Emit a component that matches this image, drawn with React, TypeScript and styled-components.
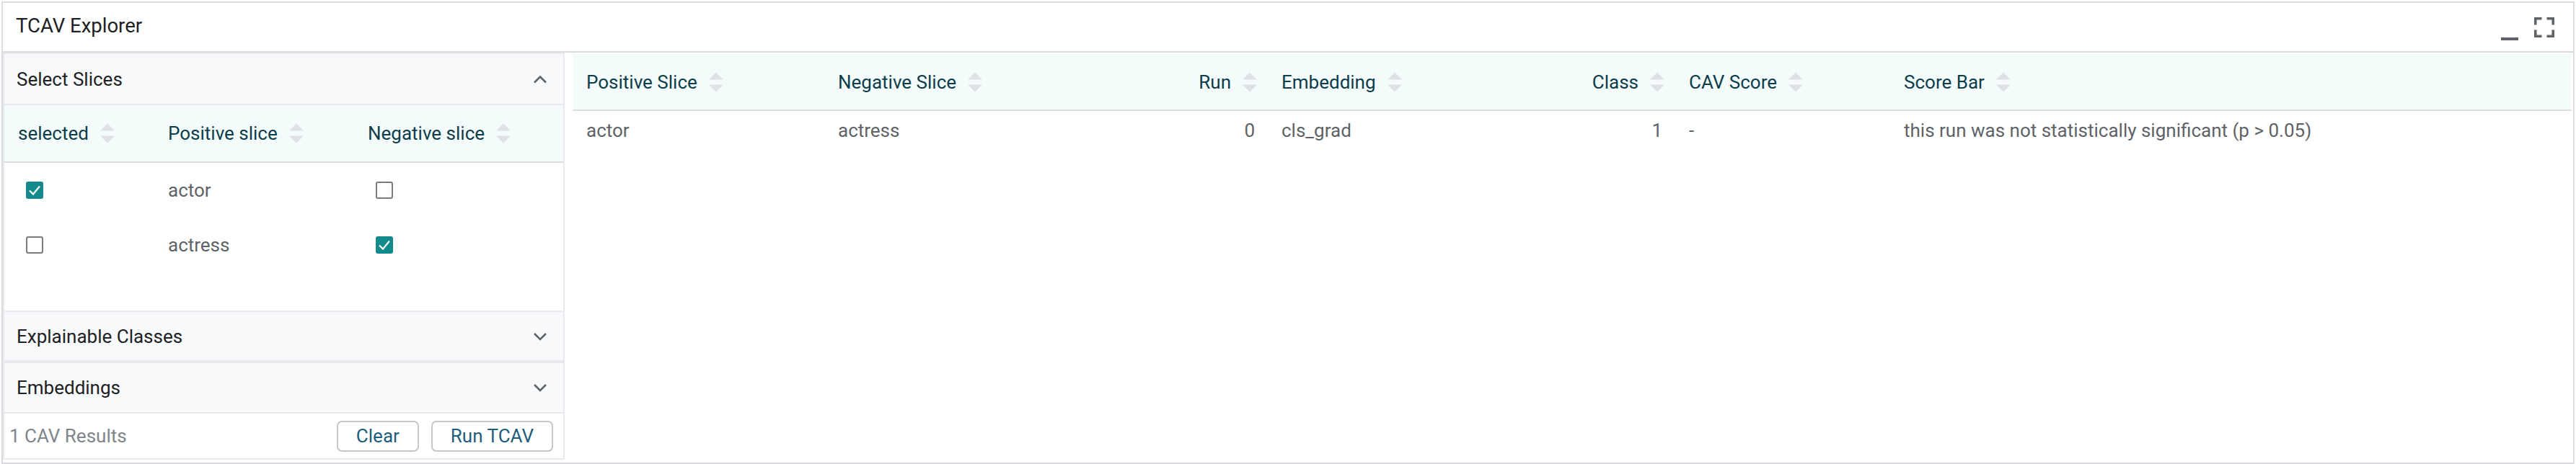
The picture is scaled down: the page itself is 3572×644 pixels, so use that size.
import React from "react";
import styled, { createGlobalStyle } from "styled-components";

const GlobalStyle = createGlobalStyle`
  html, body { margin: 0; padding: 0; background: #ffffff; }
  body { font-family: Roboto, "Noto Sans", "Liberation Sans", sans-serif; }
  * { box-sizing: border-box; }
`;

const Frame = styled.div`
  margin: 2px 2px 0 2px;
  width: 3568px;
  height: 642px;
  border: 2px solid #dadce0;
  overflow: hidden;
  display: flex;
  flex-direction: column;
  background: #fff;
`;

const TitleBar = styled.div`
  height: 69px;
  flex: none;
  border-bottom: 2px solid #dadce0;
  display: flex;
  align-items: center;
  padding: 0 26px 0 18px;
`;

const Title = styled.div`
  flex: 1;
  font-size: 27.5px;
  color: #202124;
  line-height: 1;
  padding-bottom: 3px;
`;

const TitleIcons = styled.div`
  align-self: flex-start;
  margin-top: 20px;
  display: flex;
  align-items: flex-start;
  gap: 22px;
  color: #5f6368;
`;

const Body = styled.div`
  flex: 1;
  display: flex;
  align-items: flex-start;
  gap: 11px;
  padding-right: 2px;
`;

const LeftPanel = styled.div`
  width: 779px;
  flex: none;
  border: 2px solid #e8eaed;
  display: flex;
  flex-direction: column;
`;

const Section = styled.div<{ $first?: boolean }>`
  border-top: ${(p) => (p.$first ? "0" : "2px solid #e8eaed")};
  border-bottom: 2px solid #e8eaed;
`;

const SectionHeader = styled.div<{ $h: number }>`
  height: ${(p) => p.$h}px;
  background: #f8f9fa;
  display: flex;
  align-items: center;
  justify-content: space-between;
  padding: 0 22px 0 17px;
  font-size: 26px;
  color: #202124;
`;

const SliceTable = styled.div`
  display: grid;
  grid-template-columns: 208px 277px 1fr;
  grid-template-rows: 80px 76px 76px;
  height: 285px;
  align-content: start;
`;

const SliceHeadCell = styled.div`
  background: #f3fbfb;
  border-bottom: 2px solid #dadce0;
  display: flex;
  align-items: center;
  gap: 16px;
  padding-left: 19px;
  font-size: 26px;
  color: #0d3d4b;
`;

const SliceCell = styled.div`
  display: flex;
  align-items: center;
  padding-left: 19px;
  font-size: 26px;
  color: #5f6368;
`;

const Box = styled.span<{ $checked: boolean }>`
  width: 24px;
  height: 24px;
  margin-left: 11px;
  border-radius: 3px;
  display: inline-flex;
  align-items: center;
  justify-content: center;
  background: ${(p) => (p.$checked ? "#12898b" : "#fff")};
  border: ${(p) => (p.$checked ? "0" : "2px solid #7a7a7a")};
`;

const Footer = styled.div`
  height: 62px;
  display: flex;
  align-items: center;
  padding: 0 14px 0 7px;
`;

const ResultsLabel = styled.div`
  flex: 1;
  font-size: 26px;
  color: #80868b;
`;

const Buttons = styled.div`
  display: flex;
  gap: 17px;
`;

const Button = styled.button`
  height: 43px;
  padding: 0 25px;
  background: #fff;
  border: 2px solid #c4c7cb;
  border-radius: 7px;
  font-family: Roboto, "Noto Sans", "Liberation Sans", sans-serif;
  font-size: 26px;
  color: #1f5e7b;
  line-height: 1;
  cursor: pointer;
`;

const ResultsTable = styled.div`
  flex: 1;
  margin-top: 2px;
  display: grid;
  grid-template-columns: 349px 457px 158px 322px 243px 298px 1fr;
`;

const HeadCell = styled.div<{ $right?: boolean }>`
  height: 79px;
  background: #f3fbfb;
  border-bottom: 2px solid #dadce0;
  display: flex;
  align-items: center;
  justify-content: ${(p) => (p.$right ? "flex-end" : "flex-start")};
  gap: 16px;
  padding: 0 15px 0 19px;
  font-size: 26px;
  color: #0d3d4b;
`;

const DataCell = styled.div<{ $right?: boolean }>`
  height: 54px;
  display: flex;
  align-items: center;
  justify-content: ${(p) => (p.$right ? "flex-end" : "flex-start")};
  padding: 0 18px 0 19px;
  font-size: 26px;
  color: #5f6368;
  white-space: nowrap;
`;

const SortArrows = () => (
  <svg width="20" height="28" viewBox="0 0 20 28" style={{ flex: "none" }}>
    <polygon points="0,10.5 10,0.5 20,10.5" fill="#dfe1e4" />
    <polygon points="0,17.5 20,17.5 10,27.5" fill="#dfe1e4" />
  </svg>
);

const Chevron = ({ up }: { up?: boolean }) => (
  <svg width="20" height="14" viewBox="0 0 20 14">
    <polyline
      points={up ? "2,11.5 10,3.5 18,11.5" : "2,3 10,11 18,3"}
      fill="none"
      stroke="#5f6368"
      strokeWidth="2.6"
    />
  </svg>
);

const CheckBox = ({ checked }: { checked: boolean }) => (
  <Box $checked={checked}>
    {checked && (
      <svg width="24" height="24" viewBox="0 0 24 24">
        <polyline points="5,12.5 10,17.5 19,6.5" fill="none" stroke="#fff" strokeWidth="2.2" />
      </svg>
    )}
  </Box>
);

const MinimizeIcon = () => (
  <svg width="24" height="32" viewBox="0 0 24 32">
    <rect x="0" y="28" width="24" height="4" fill="currentColor" />
  </svg>
);

const FullscreenIcon = () => (
  <svg width="28" height="28" viewBox="0 0 28 28">
    <path
      d="M1.75 10.5V1.75H10.5M17.5 1.75H26.25V10.5M26.25 17.5V26.25H17.5M10.5 26.25H1.75V17.5"
      fill="none"
      stroke="currentColor"
      strokeWidth="3.5"
    />
  </svg>
);

const slices = [
  { name: "actor", pos: true, neg: false },
  { name: "actress", pos: false, neg: true },
];

const resultHeaders: { label: string; right?: boolean }[] = [
  { label: "Positive Slice" },
  { label: "Negative Slice" },
  { label: "Run", right: true },
  { label: "Embedding" },
  { label: "Class", right: true },
  { label: "CAV Score" },
  { label: "Score Bar" },
];

const resultRow: { value: string; right?: boolean }[] = [
  { value: "actor" },
  { value: "actress" },
  { value: "0", right: true },
  { value: "cls_grad" },
  { value: "1", right: true },
  { value: "-" },
  { value: "this run was not statistically significant (p > 0.05)" },
];

export default function App() {
  return (
    <>
      <GlobalStyle />
      <Frame>
        <TitleBar>
          <Title>TCAV Explorer</Title>
          <TitleIcons>
            <MinimizeIcon />
            <FullscreenIcon />
          </TitleIcons>
        </TitleBar>
        <Body>
          <LeftPanel>
            <Section $first>
              <SectionHeader $h={69}>
                <span>Select Slices</span>
                <Chevron up />
              </SectionHeader>
            </Section>
            <SliceTable>
              <SliceHeadCell>
                selected <SortArrows />
              </SliceHeadCell>
              <SliceHeadCell>
                Positive slice <SortArrows />
              </SliceHeadCell>
              <SliceHeadCell>
                Negative slice <SortArrows />
              </SliceHeadCell>
              {slices.map((s) => (
                <React.Fragment key={s.name}>
                  <SliceCell>
                    <CheckBox checked={s.pos} />
                  </SliceCell>
                  <SliceCell>{s.name}</SliceCell>
                  <SliceCell>
                    <CheckBox checked={s.neg} />
                  </SliceCell>
                </React.Fragment>
              ))}
            </SliceTable>
            <Section>
              <SectionHeader $h={67}>
                <span>Explainable Classes</span>
                <Chevron />
              </SectionHeader>
            </Section>
            <Section>
              <SectionHeader $h={68}>
                <span>Embeddings</span>
                <Chevron />
              </SectionHeader>
            </Section>
            <Footer>
              <ResultsLabel>1 CAV Results</ResultsLabel>
              <Buttons>
                <Button>Clear</Button>
                <Button>Run TCAV</Button>
              </Buttons>
            </Footer>
          </LeftPanel>
          <ResultsTable>
            {resultHeaders.map((h) => (
              <HeadCell key={h.label} $right={h.right}>
                {h.label} <SortArrows />
              </HeadCell>
            ))}
            {resultRow.map((c, i) => (
              <DataCell key={i} $right={c.right}>
                {c.value}
              </DataCell>
            ))}
          </ResultsTable>
        </Body>
      </Frame>
    </>
  );
}
